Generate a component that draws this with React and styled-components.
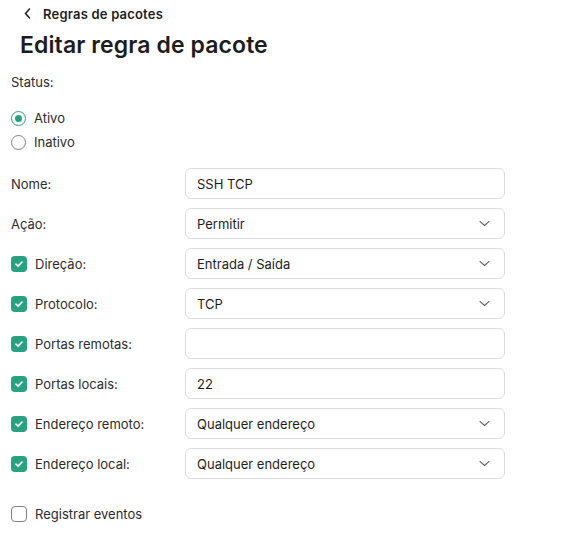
import React from "react";
import styled, { createGlobalStyle } from "styled-components";

const GlobalStyle = createGlobalStyle`
  body {
    margin: 0;
    background: #ffffff;
    font-family: Inter, "Noto Sans", "Liberation Sans", sans-serif;
    color: #1d1d1f;
  }
`;

const Page = styled.div`
  width: 567px;
  padding: 5px 0 0 11px;
  box-sizing: border-box;
`;

const Back = styled.div`
  display: flex;
  align-items: center;
  gap: 12px;
  padding-left: 13px;
  height: 17px;
  font-size: 13px;
  font-weight: 600;
  letter-spacing: 0.2px;
  color: #1d1d1f;
`;

const Title = styled.h1`
  margin: 8px 0 0 9px;
  font-size: 23px;
  line-height: 30px;
  font-weight: 600;
  letter-spacing: 0.1px;
`;

const Label = styled.div`
  font-size: 13px;
  color: #2b2b2e;
  display: flex;
  align-items: center;
  gap: 8px;
`;

const StatusLabel = styled(Label)`
  margin-top: 13px;
  height: 18px;
`;

const RadioGroup = styled.div`
  display: flex;
  flex-direction: column;
  gap: 6px;
  margin-top: 18px;
`;

const RadioRow = styled(Label)`
  height: 18px;
`;

const RadioCircle = styled.span`
  width: 15px;
  height: 15px;
  box-sizing: border-box;
  border-radius: 50%;
  border: 1.5px solid ${(p) => (p.$on ? "#26a283" : "#7c7f86")};
  display: flex;
  align-items: center;
  justify-content: center;
  &::after {
    content: "";
    display: ${(p) => (p.$on ? "block" : "none")};
    width: 7px;
    height: 7px;
    border-radius: 50%;
    background: #26a283;
  }
`;

const Form = styled.div`
  display: flex;
  flex-direction: column;
  gap: 9px;
  margin-top: 17px;
`;

const Row = styled.div`
  display: grid;
  grid-template-columns: 174px 320px;
  align-items: center;
`;

const Field = styled.div`
  height: 31px;
  box-sizing: border-box;
  border: 1px solid #dcdde1;
  border-radius: 6px;
  padding: 0 14px 0 11px;
  display: flex;
  align-items: center;
  justify-content: space-between;
  font-size: 13px;
  color: #1d1d1f;
`;

const Box = styled.span`
  width: 16px;
  height: 16px;
  box-sizing: border-box;
  border-radius: 4px;
  display: flex;
  align-items: center;
  justify-content: center;
  background: ${(p) => (p.$on ? "#26a283" : "#fff")};
  border: ${(p) => (p.$on ? "none" : "1.5px solid #7c7f86")};
`;

const Footer = styled(Label)`
  margin-top: 26px;
  height: 18px;
`;

const Check = ({ on }) => (
  <Box $on={on}>
    {on && (
      <svg width="10" height="10" viewBox="0 0 10 10">
        <path d="M2 5.2 4.1 7.2 8 3" fill="none" stroke="#fff" strokeWidth="1.7" strokeLinecap="round" strokeLinejoin="round" />
      </svg>
    )}
  </Box>
);

const Chevron = () => (
  <svg width="11" height="7" viewBox="0 0 11 7">
    <path d="M1 1.5 5.5 5.5 10 1.5" fill="none" stroke="#676a71" strokeWidth="1.1" strokeLinecap="round" strokeLinejoin="round" />
  </svg>
);

const rows = [
  { label: "Nome:", value: "SSH TCP" },
  { label: "Ação:", value: "Permitir", select: true },
  { label: "Direção:", value: "Entrada / Saída", select: true, check: true },
  { label: "Protocolo:", value: "TCP", select: true, check: true },
  { label: "Portas remotas:", value: "", check: true },
  { label: "Portas locais:", value: "22", check: true },
  { label: "Endereço remoto:", value: "Qualquer endereço", select: true, check: true },
  { label: "Endereço local:", value: "Qualquer endereço", select: true, check: true },
];

const App = () => {
  return (
    <Page>
      <GlobalStyle />
      <Back>
        <svg width="7" height="11" viewBox="0 0 7 11">
          <path d="M5.5 1 1.5 5.5 5.5 10" fill="none" stroke="#1d1d1f" strokeWidth="1.5" strokeLinecap="round" strokeLinejoin="round" />
        </svg>
        Regras de pacotes
      </Back>
      <Title>Editar regra de pacote</Title>
      <StatusLabel>Status:</StatusLabel>
      <RadioGroup>
        <RadioRow>
          <RadioCircle $on />
          Ativo
        </RadioRow>
        <RadioRow>
          <RadioCircle />
          Inativo
        </RadioRow>
      </RadioGroup>
      <Form>
        {rows.map((r) => (
          <Row key={r.label}>
            <Label>
              {r.check && <Check on />}
              {r.label}
            </Label>
            <Field>
              <span>{r.value}</span>
              {r.select && <Chevron />}
            </Field>
          </Row>
        ))}
      </Form>
      <Footer>
        <Check />
        Registrar eventos
      </Footer>
    </Page>
  );
};

export default App;
